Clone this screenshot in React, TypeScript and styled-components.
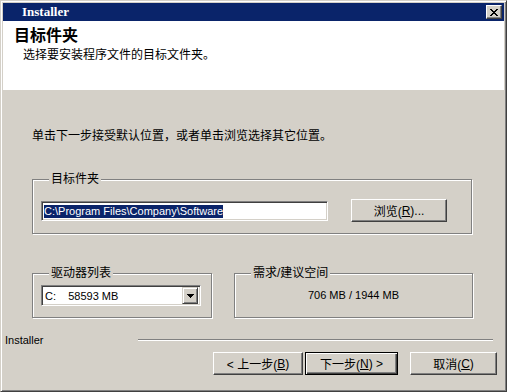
import React from 'react';
import styled, { createGlobalStyle, css } from 'styled-components';

const GlobalStyle = createGlobalStyle`
  html, body {
    margin: 0;
    padding: 0;
    background: #d4d0c8;
  }
  body {
    font-family: 'Liberation Sans', 'Noto Sans CJK SC', sans-serif;
    font-size: 12px;
    color: #000;
  }
`;

const Window = styled.div`
  width: 507px;
  height: 392px;
  box-sizing: border-box;
  background: #d4d0c8;
  border: 1px solid;
  border-color: #d4d0c8 #404040 #404040 #d4d0c8;
  box-shadow: inset 1px 1px 0 #fff, inset -1px -1px 0 #808080;
  padding: 2px;
  display: flex;
  flex-direction: column;
`;

const TitleBar = styled.div`
  height: 18px;
  flex-shrink: 0;
  background: #0a246a;
  display: flex;
  align-items: center;
  padding-left: 19px;
`;

const TitleText = styled.span`
  font-family: 'Liberation Serif', serif;
  font-weight: 700;
  font-size: 13px;
  color: #fff;
`;

const CaptionButton = styled.div`
  margin-left: auto;
  margin-right: 2px;
  width: 16px;
  height: 14px;
  box-sizing: border-box;
  background: #d4d0c8;
  border: 1px solid;
  border-color: #fff #404040 #404040 #fff;
  box-shadow: inset -1px -1px 0 #808080;
  display: flex;
  align-items: center;
  justify-content: center;
`;

const Header = styled.div`
  height: 69px;
  flex-shrink: 0;
  background: #fff;
  padding: 4px 0 0 11px;
  box-sizing: border-box;
`;

const HeaderTitle = styled.div`
  font-family: 'Noto Sans CJK SC', sans-serif;
  font-size: 16px;
  font-weight: 700;
  line-height: 18px;
`;

const HeaderSub = styled.div`
  font-family: 'Noto Sans CJK SC', sans-serif;
  font-size: 12px;
  line-height: 14px;
  margin: 4px 0 0 9px;
`;

const Body = styled.div`
  display: flex;
  flex-direction: column;
  padding: 38px 0 0 29px;
`;

const Prompt = styled.div`
  font-family: 'Noto Sans CJK SC', sans-serif;
  line-height: 14px;
`;

const Group = styled.fieldset<{ $width: number }>`
  margin: 0;
  padding: 0 8px;
  width: ${(p) => p.$width}px;
  box-sizing: border-box;
  min-inline-size: 0;
  border: 1px solid #808080;
  box-shadow: inset 1px 1px 0 #fff, 1px 1px 0 #fff;
`;

const Legend = styled.legend`
  margin-left: 8px;
  padding: 0 2px;
  line-height: 14px;
  font-size: 12px;
  background: #d4d0c8;
`;

const FolderGroup = styled(Group)`
  margin-top: 30px;
`;

const FolderRow = styled.div`
  display: flex;
  align-items: center;
  padding: 13px 0 11px;
`;

const sunken = css`
  box-sizing: border-box;
  background: #fff;
  border: 1px solid;
  border-color: #808080 #fff #fff #808080;
  box-shadow: inset 1px 1px 0 #404040, inset -1px -1px 0 #d4d0c8;
`;

const EditBox = styled.div`
  ${sunken};
  width: 287px;
  height: 20px;
  padding: 1px 0 0 2px;
  font-size: 11px;
  display: flex;
  align-items: center;
`;

const Selection = styled.span`
  background: #0a246a;
  color: #fff;
  line-height: 13px;
  white-space: pre;
`;

const Button = styled.button<{ $width: number; $default?: boolean }>`
  width: ${(p) => p.$width}px;
  height: 23px;
  padding: 0;
  box-sizing: border-box;
  font-family: 'Liberation Sans', 'Noto Sans CJK SC', sans-serif;
  font-size: 12px;
  color: #000;
  background: #d4d0c8;
  border: 1px solid;
  border-color: #fff #404040 #404040 #fff;
  box-shadow: inset -1px -1px 0 #808080;
  display: flex;
  align-items: center;
  justify-content: center;
  white-space: pre;
  ${(p) =>
    p.$default &&
    css`
      border-color: #000;
      box-shadow: inset 1px 1px 0 #fff, inset -1px -1px 0 #404040, inset -2px -2px 0 #808080;
    `}
`;

const BrowseButton = styled(Button)`
  margin-left: 23px;
`;

const Key = styled.span`
  text-decoration: underline;
`;

const GroupRow = styled.div`
  display: flex;
  gap: 22px;
  margin-top: 32px;
`;

const DriveRow = styled.div`
  padding: 5px 0 11px;
`;

const ComboBox = styled.div`
  ${sunken};
  width: 160px;
  height: 21px;
  padding: 2px 2px 2px 3px;
  display: flex;
  align-items: center;
  font-size: 11px;
`;

const ComboValue = styled.span`
  flex: 1;
  white-space: pre;
`;

const DropButton = styled.div`
  width: 16px;
  height: 17px;
  box-sizing: border-box;
  background: #d4d0c8;
  border: 1px solid;
  border-color: #d4d0c8 #404040 #404040 #d4d0c8;
  box-shadow: inset 1px 1px 0 #fff, inset -1px -1px 0 #808080;
  display: flex;
  align-items: center;
  justify-content: center;
`;

const SpaceText = styled.div`
  text-align: center;
  font-size: 11px;
  line-height: 14px;
  padding-top: 8px;
`;

const Footer = styled.div`
  display: flex;
  align-items: center;
  margin-top: 15px;
  padding: 0 11px 0 2px;
`;

const Brand = styled.span`
  width: 133px;
  font-size: 11px;
  line-height: 14px;
  color: #000;
`;

const EtchedLine = styled.div`
  flex: 1;
  height: 0;
  border-top: 1px solid #808080;
  border-bottom: 1px solid #fff;
`;

const ButtonBar = styled.div`
  display: flex;
  justify-content: flex-end;
  padding: 5px 7px 0 0;
`;

const NextButton = styled(Button)`
  margin-left: 2px;
`;

const CancelButton = styled(Button)`
  margin-left: 12px;
`;

export default function App() {
  return (
    <>
      <GlobalStyle />
      <Window>
        <TitleBar>
          <TitleText>Installer</TitleText>
          <CaptionButton>
            <svg width="8" height="7" viewBox="0 0 8 7" shapeRendering="crispEdges">
              <path d="M0 0h2v1h-2zM6 0h2v1h-2zM1 1h2v1h-2zM5 1h2v1h-2zM2 2h4v1h-4zM3 3h2v1h-2zM2 4h4v1h-4zM1 5h2v1h-2zM5 5h2v1h-2zM0 6h2v1h-2zM6 6h2v1h-2z" fill="#000" />
            </svg>
          </CaptionButton>
        </TitleBar>
        <Header>
          <HeaderTitle>目标件夹</HeaderTitle>
          <HeaderSub>选择要安装程序文件的目标文件夹。</HeaderSub>
        </Header>
        <Body>
          <Prompt>单击下一步接受默认位置，或者单击浏览选择其它位置。</Prompt>
          <FolderGroup $width={440}>
            <Legend>目标件夹</Legend>
            <FolderRow>
              <EditBox>
                <Selection>C:\Program Files\Company\Software</Selection>
              </EditBox>
              <BrowseButton $width={96}>
                浏览(<Key>R</Key>)...
              </BrowseButton>
            </FolderRow>
          </FolderGroup>
          <GroupRow>
            <Group $width={180}>
              <Legend>驱动器列表</Legend>
              <DriveRow>
                <ComboBox>
                  <ComboValue>C:    58593 MB</ComboValue>
                  <DropButton>
                    <svg width="7" height="4" viewBox="0 0 7 4" shapeRendering="crispEdges">
                      <path d="M0 0h7v1h-7zM1 1h5v1h-5zM2 2h3v1h-3zM3 3h1v1h-1z" fill="#000" />
                    </svg>
                  </DropButton>
                </ComboBox>
              </DriveRow>
            </Group>
            <Group $width={239}>
              <Legend>需求/建议空间</Legend>
              <SpaceText>706 MB / 1944 MB</SpaceText>
            </Group>
          </GroupRow>
        </Body>
        <Footer>
          <Brand>Installer</Brand>
          <EtchedLine />
        </Footer>
        <ButtonBar>
          <Button $width={90}>
            {'< 上一步('}
            <Key>B</Key>)
          </Button>
          <NextButton $width={93} $default>
            下一步(<Key>N</Key>
            {') >'}
          </NextButton>
          <CancelButton $width={87}>
            取消(<Key>C</Key>)
          </CancelButton>
        </ButtonBar>
      </Window>
    </>
  );
}
